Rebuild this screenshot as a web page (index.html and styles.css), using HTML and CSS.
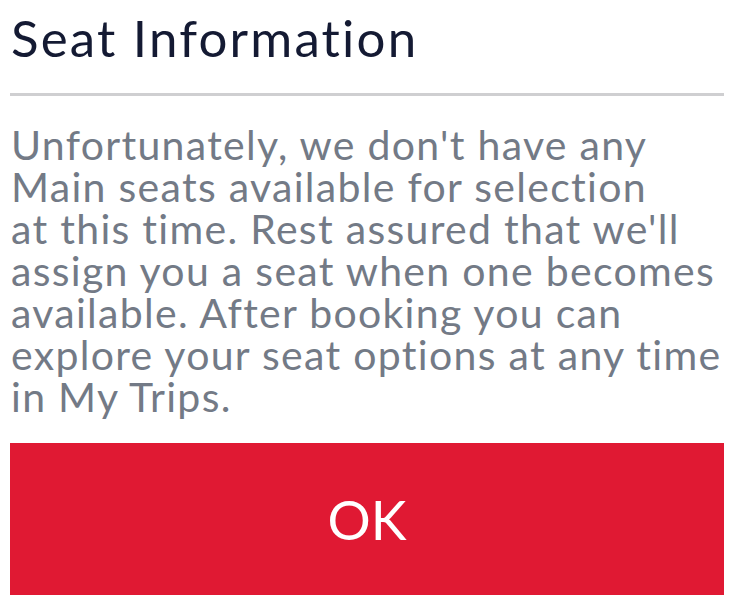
FILE: index.html
```html
<!DOCTYPE html>
<html lang="en">
<head>
<meta charset="utf-8">
<title>Seat Information</title>
<link rel="stylesheet" href="styles.css">
</head>
<body>
<div class="dialog">
  <h1 class="title">Seat Information</h1>
  <hr class="divider">
  <p class="message">Unfortunately, we don't have any<br>Main seats available for selection<br>at this time. Rest assured that we'll<br>assign you a seat when one becomes<br>available. After booking you can<br>explore your seat options at any time<br>in My Trips.</p>
  <button class="ok-btn" type="button">OK</button>
</div>
</body>
</html>
```
FILE: styles.css
```css
html, body {
  margin: 0;
  padding: 0;
  background: #ffffff;
}
.dialog {
  width: 738px;
  height: 602px;
  box-sizing: border-box;
  padding: 0 14px 0 10px;
  display: flex;
  flex-direction: column;
  font-family: Lato, "Open Sans", sans-serif;
}
.title {
  margin: 10px 0 0 1px;
  font-size: 51px;
  font-weight: 400;
  line-height: 56px;
  letter-spacing: 2.2px;
  color: #141a33;
}
.divider {
  margin: 27px 0 0 0;
  border: 0;
  height: 3px;
  background: #cfcfd1;
}
.message {
  margin: 28px 0 0 1px;
  font-size: 41px;
  line-height: 42px;
  letter-spacing: 1.3px;
  color: #737a86;
}
.ok-btn {
  margin-top: 25px;
  height: 152px;
  border: 0;
  background: #e01933;
  color: #ffffff;
  font-family: Lato, "Open Sans", sans-serif;
  font-size: 54px;
  padding: 0;
}
```
